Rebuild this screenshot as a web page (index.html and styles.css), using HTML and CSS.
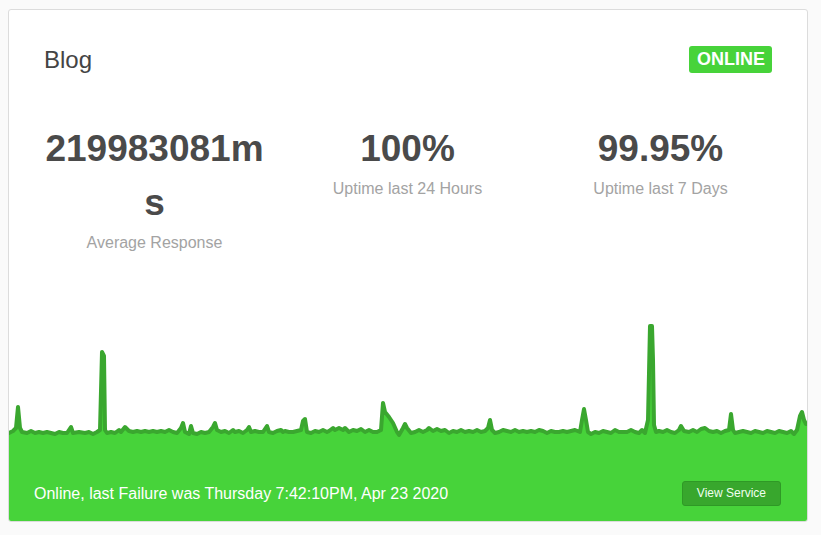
FILE: index.html
```html
<!DOCTYPE html>
<html>
<head>
<meta charset="utf-8">
<link rel="stylesheet" href="styles.css">
</head>
<body>
<div class="page">
  <div class="card">
    <div class="card-header">
      <h2 class="title">Blog</h2>
      <span class="badge">ONLINE</span>
    </div>
    <div class="stats">
      <div class="stat">
        <div class="stat-value">219983081ms</div>
        <div class="stat-label">Average Response</div>
      </div>
      <div class="stat">
        <div class="stat-value">100%</div>
        <div class="stat-label">Uptime last 24 Hours</div>
      </div>
      <div class="stat">
        <div class="stat-value">99.95%</div>
        <div class="stat-label">Uptime last 7 Days</div>
      </div>
    </div>
    <div class="chart">
      <svg class="chart-svg" viewBox="0 0 798 140" width="798" height="140" preserveAspectRatio="none">
        <path class="chart-fill" d="M0,113 L4,111 L7,108 L9,87 L11,108 L13,112 L18,113 L22,111 L26,113 L30,112 L34,113 L38,112 L42,113 L46,114 L50,112 L54,113 L58,113 L62,107 L64,113 L70,112 L76,113 L80,112 L84,114 L88,112 L91,110 L93,32 L95,36 L96,110 L98,113 L102,112 L106,113 L110,110 L112,112 L116,107 L120,111 L124,112 L128,111 L132,112 L136,111 L140,112 L144,111 L148,112 L152,111 L156,112 L160,110 L164,112 L168,113 L172,108 L174,103 L176,112 L180,114 L182,106 L184,113 L188,114 L192,112 L196,113 L200,112 L204,107 L206,103 L208,110 L212,112 L216,111 L220,113 L224,110 L226,112 L230,111 L234,113 L238,110 L240,107 L242,112 L246,111 L250,112 L254,112 L258,106 L260,112 L264,113 L268,111 L272,110 L274,112 L276,111 L280,112 L284,112 L288,111 L292,110 L294,101 L296,99 L298,112 L302,113 L306,111 L310,112 L314,110 L318,112 L320,111 L324,108 L326,110 L330,108 L334,110 L336,108 L340,112 L344,110 L348,111 L352,109 L356,112 L360,110 L364,112 L368,112 L372,110 L374,83 L376,92 L380,97 L384,103 L388,112 L390,115 L394,108 L396,104 L398,108 L402,113 L406,112 L410,110 L414,112 L418,110 L420,108 L424,111 L428,109 L432,111 L436,110 L440,113 L444,111 L448,112 L452,110 L456,112 L460,111 L464,112 L468,110 L472,112 L476,111 L479,108 L481,100 L483,110 L486,113 L490,112 L494,110 L498,111 L502,112 L506,110 L510,112 L514,111 L518,112 L522,111 L526,112 L530,110 L534,111 L538,113 L542,111 L546,112 L550,112 L554,111 L558,112 L562,111 L566,110 L571,112 L573,100 L575,89 L577,100 L579,112 L582,114 L586,112 L590,113 L594,111 L598,112 L602,113 L606,110 L610,112 L614,112 L618,112 L622,110 L626,112 L630,113 L633,110 L636,113 L639,100 L641,6 L643,6 L644,40 L645,105 L647,112 L650,111 L654,112 L658,110 L662,112 L666,113 L670,110 L672,106 L675,111 L680,112 L684,110 L688,112 L692,109 L696,108 L700,111 L704,112 L708,111 L712,113 L716,111 L720,110 L722,94 L724,110 L726,113 L730,112 L734,111 L738,112 L742,113 L746,111 L750,112 L754,113 L758,111 L762,112 L766,113 L770,111 L774,112 L778,113 L782,111 L785,114 L788,110 L791,96 L793,92 L795,100 L797,104 L798,104 L798,140 L0,140 Z"/>
        <path class="chart-line" d="M0,113 L4,111 L7,108 L9,87 L11,108 L13,112 L18,113 L22,111 L26,113 L30,112 L34,113 L38,112 L42,113 L46,114 L50,112 L54,113 L58,113 L62,107 L64,113 L70,112 L76,113 L80,112 L84,114 L88,112 L91,110 L93,32 L95,36 L96,110 L98,113 L102,112 L106,113 L110,110 L112,112 L116,107 L120,111 L124,112 L128,111 L132,112 L136,111 L140,112 L144,111 L148,112 L152,111 L156,112 L160,110 L164,112 L168,113 L172,108 L174,103 L176,112 L180,114 L182,106 L184,113 L188,114 L192,112 L196,113 L200,112 L204,107 L206,103 L208,110 L212,112 L216,111 L220,113 L224,110 L226,112 L230,111 L234,113 L238,110 L240,107 L242,112 L246,111 L250,112 L254,112 L258,106 L260,112 L264,113 L268,111 L272,110 L274,112 L276,111 L280,112 L284,112 L288,111 L292,110 L294,101 L296,99 L298,112 L302,113 L306,111 L310,112 L314,110 L318,112 L320,111 L324,108 L326,110 L330,108 L334,110 L336,108 L340,112 L344,110 L348,111 L352,109 L356,112 L360,110 L364,112 L368,112 L372,110 L374,83 L376,92 L380,97 L384,103 L388,112 L390,115 L394,108 L396,104 L398,108 L402,113 L406,112 L410,110 L414,112 L418,110 L420,108 L424,111 L428,109 L432,111 L436,110 L440,113 L444,111 L448,112 L452,110 L456,112 L460,111 L464,112 L468,110 L472,112 L476,111 L479,108 L481,100 L483,110 L486,113 L490,112 L494,110 L498,111 L502,112 L506,110 L510,112 L514,111 L518,112 L522,111 L526,112 L530,110 L534,111 L538,113 L542,111 L546,112 L550,112 L554,111 L558,112 L562,111 L566,110 L571,112 L573,100 L575,89 L577,100 L579,112 L582,114 L586,112 L590,113 L594,111 L598,112 L602,113 L606,110 L610,112 L614,112 L618,112 L622,110 L626,112 L630,113 L633,110 L636,113 L639,100 L641,6 L643,6 L644,40 L645,105 L647,112 L650,111 L654,112 L658,110 L662,112 L666,113 L670,110 L672,106 L675,111 L680,112 L684,110 L688,112 L692,109 L696,108 L700,111 L704,112 L708,111 L712,113 L716,111 L720,110 L722,94 L724,110 L726,113 L730,112 L734,111 L738,112 L742,113 L746,111 L750,112 L754,113 L758,111 L762,112 L766,113 L770,111 L774,112 L778,113 L782,111 L785,114 L788,110 L791,96 L793,92 L795,100 L797,104 L798,104"/>
      </svg>
    </div>
    <div class="card-footer">
      <span class="footer-text">Online, last Failure was Thursday 7:42:10PM, Apr 23 2020</span>
      <a class="btn" href="#">View Service</a>
    </div>
  </div>
</div>
</body>
</html>
```

FILE: styles.css
```css
html, body {
  margin: 0;
  padding: 0;
  background: #fafafa;
  font-family: "Liberation Sans", Arial, sans-serif;
}

.page {
  padding: 9px 13px 0 8px;
}

.card {
  width: 800px;
  height: 513px;
  box-sizing: border-box;
  background: #ffffff;
  border: 1px solid #dcdcdc;
  border-radius: 3px;
  display: flex;
  flex-direction: column;
  overflow: hidden;
}

.card-header {
  display: flex;
  justify-content: space-between;
  align-items: center;
  padding: 36px 35px 0 35px;
}

.title {
  margin: 0;
  font-size: 24px;
  line-height: 27px;
  font-weight: normal;
  color: #444444;
}

.badge {
  display: inline-block;
  background: #47d33a;
  color: #ffffff;
  font-weight: bold;
  font-size: 18px;
  line-height: 27px;
  height: 27px;
  padding: 0 7px 0 8px;
  border-radius: 3px;
}

.stats {
  display: grid;
  grid-template-columns: repeat(3, 253px);
  margin: 49px 20px 0 19px;
  text-align: center;
}

.stat {
  padding: 0 15px;
}

.stat-value {
  font-size: 37px;
  line-height: 54px;
  font-weight: bold;
  color: #4a4a4a;
  word-break: break-all;
}

.stat-label {
  font-size: 16px;
  line-height: 25px;
  color: #a3a3a3;
}

.chart {
  margin-top: auto;
  height: 140px;
  flex: none;
}

.chart-svg {
  display: block;
  overflow: visible;
}

.chart-fill {
  fill: #47d33a;
}

.chart-line {
  fill: none;
  stroke: #3aa72f;
  stroke-width: 4;
  stroke-linejoin: round;
  stroke-linecap: round;
}

.card-footer {
  flex: none;
  height: 61px;
  box-sizing: border-box;
  background: #47d33a;
  display: flex;
  justify-content: space-between;
  align-items: center;
  padding: 6px 26px 0 25px;
}

.footer-text {
  color: #ffffff;
  font-size: 16px;
}

.btn {
  display: inline-block;
  box-sizing: border-box;
  height: 25px;
  line-height: 23px;
  padding: 0 14px;
  font-size: 12px;
  color: #effff0;
  text-decoration: none;
  background: #38a72d;
  border: 1px solid #2f9926;
  border-radius: 3px;
}
```
